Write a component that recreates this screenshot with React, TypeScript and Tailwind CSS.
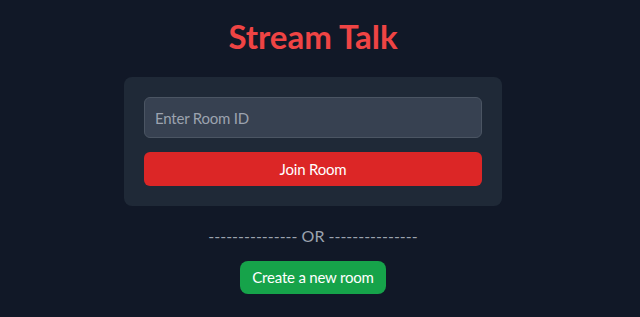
import React from "react";

export default function App() {
  return (
    <div
      className="min-h-screen bg-[#111827] flex flex-col items-center pt-[18px] pr-[14px]"
      style={{ fontFamily: 'Lato, "Noto Sans", sans-serif' }}
    >
      <h1 className="text-[33px] leading-[37px] font-bold text-[#ef4444]">Stream Talk</h1>
      <div className="mt-[22px] w-[378px] bg-[#1f2937] rounded-lg p-5 flex flex-col gap-[14px]">
        <input
          type="text"
          placeholder="Enter Room ID"
          className="w-full h-[41px] px-[10px] bg-[#374151] border border-[#4b5563] rounded-md text-white text-[15px] tracking-[-0.2px] placeholder:text-[#9ca3af] outline-none"
        />
        <button className="w-full h-[34px] bg-[#dc2626] rounded-md text-white text-[15px] tracking-[-0.2px]">
          Join Room
        </button>
      </div>
      <div className="mt-[18px] h-[24px] leading-[24px] text-[16px] text-[#9ca3af]">
        --------------- OR ---------------
      </div>
      <button className="mt-[13px] h-[33px] w-[146px] bg-[#16a34a] rounded-lg text-white text-[15px] tracking-[-0.2px]">
        Create a new room
      </button>
    </div>
  );
}
